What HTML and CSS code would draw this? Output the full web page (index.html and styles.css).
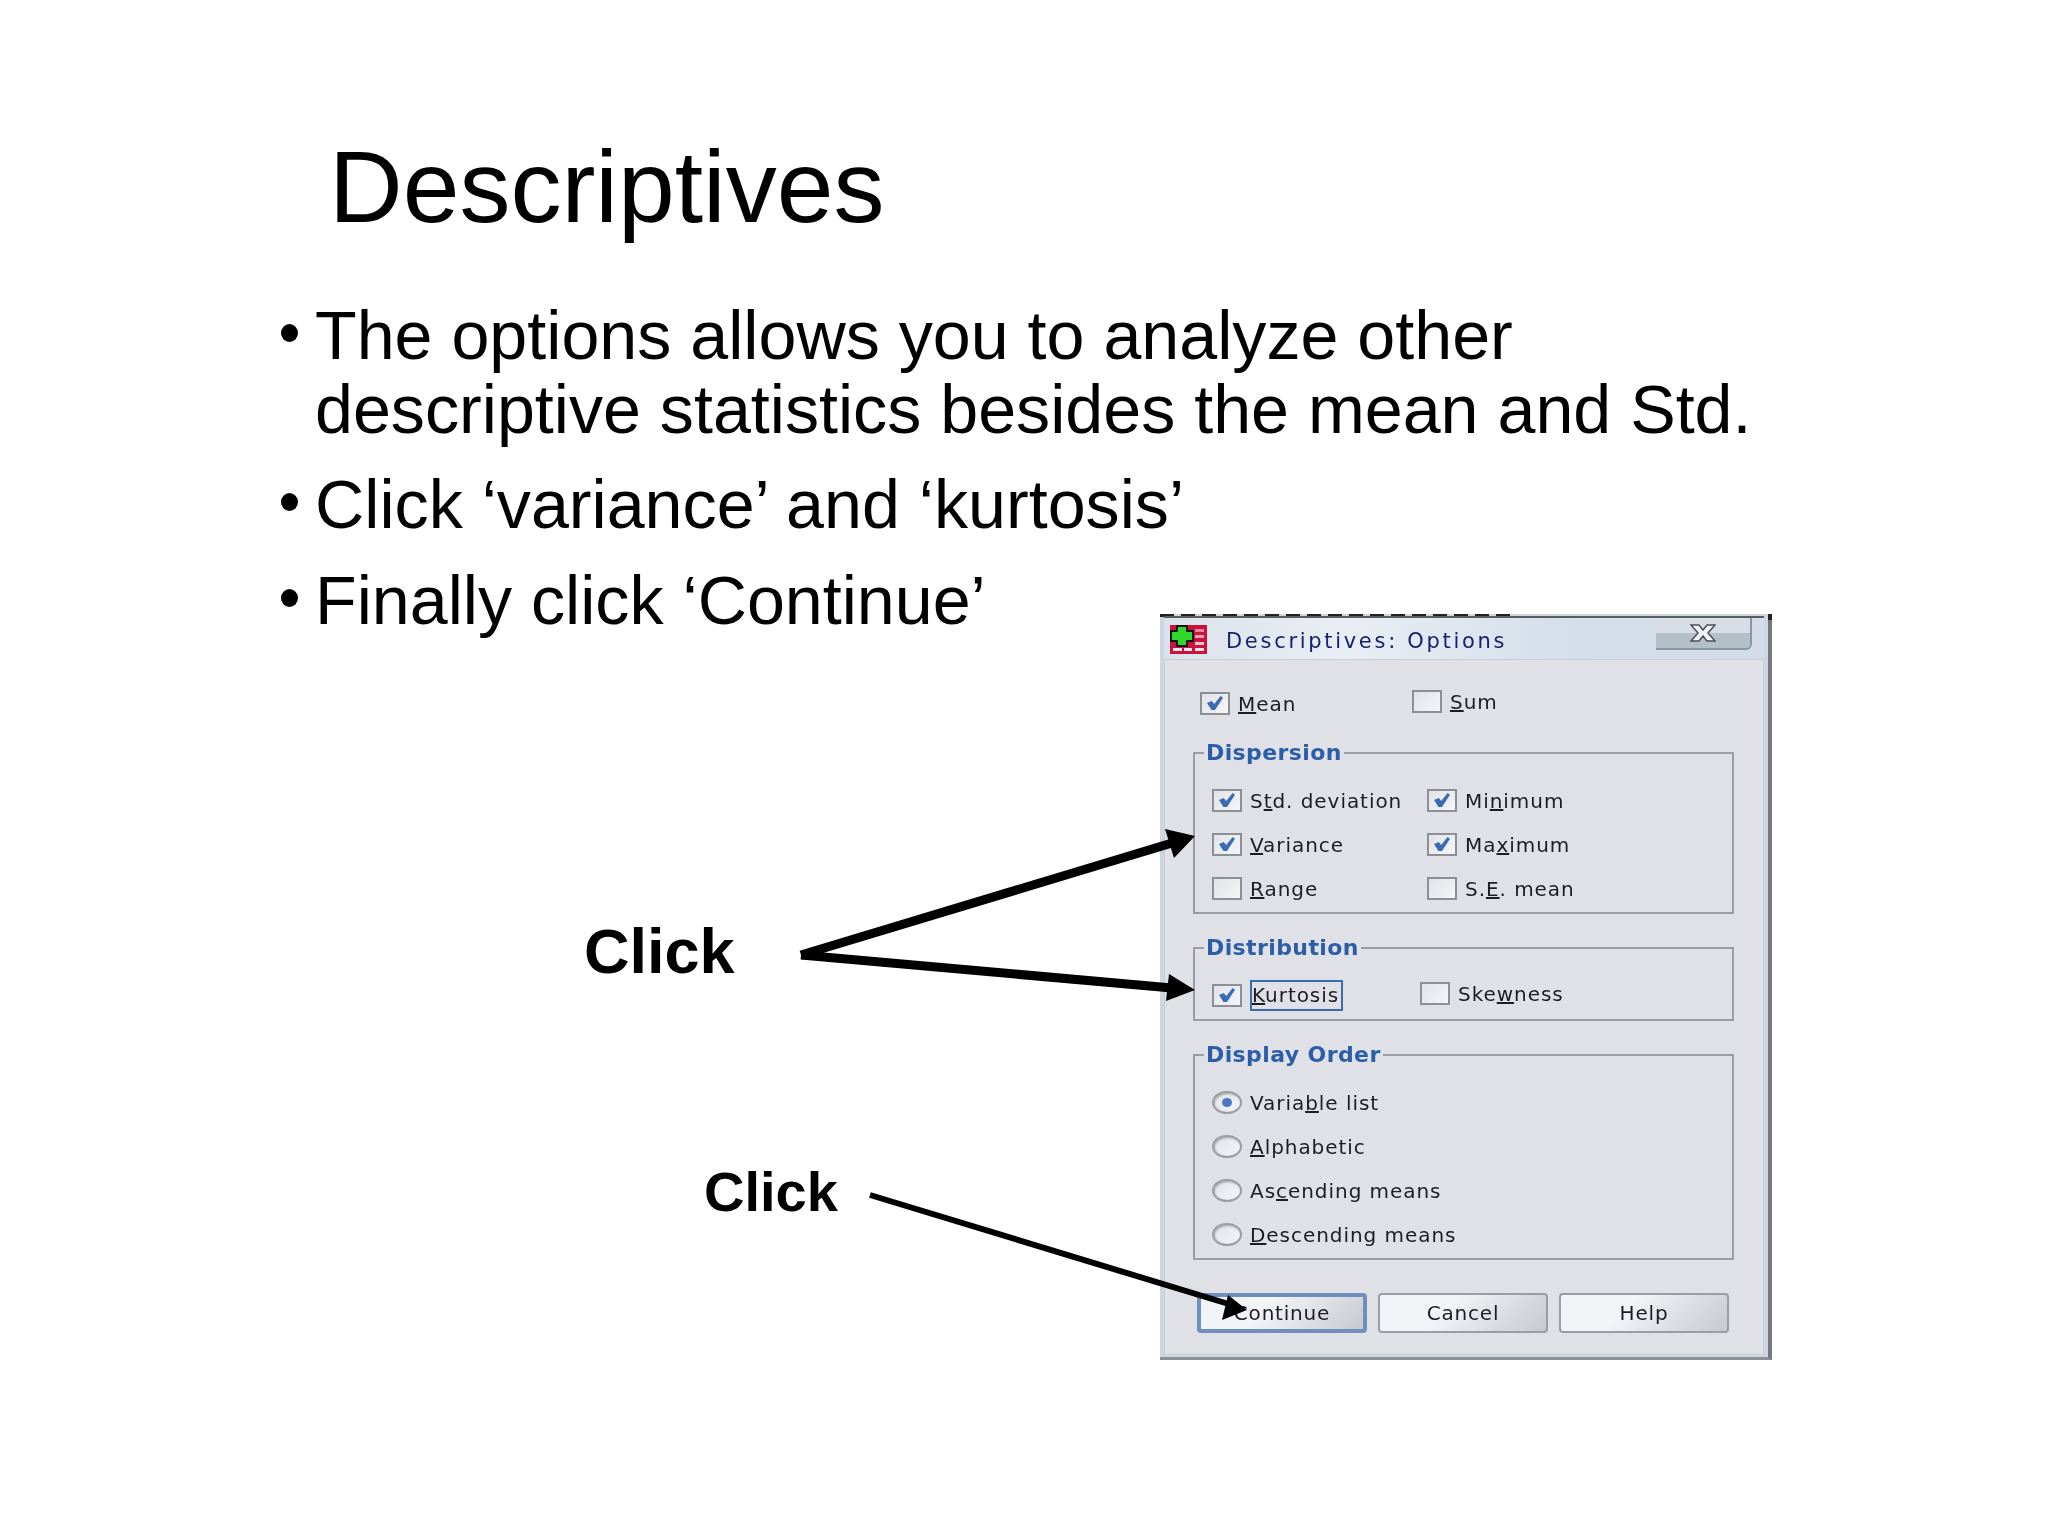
FILE: index.html
```html
<!DOCTYPE html>
<html lang="en">
<head>
    <meta charset="UTF-8">
    <title>Descriptives</title>
    <link rel="stylesheet" href="styles.css">
</head>
<body>
    <div class="slide">
        <h1 class="slide-title">Descriptives</h1>
        <ul class="bullets">
            <li>The options allows you to analyze other descriptive statistics besides the mean and Std.</li>
            <li>Click ‘variance’ and ‘kurtosis’</li>
            <li>Finally click ‘Continue’</li>
        </ul>

        <div class="callout callout-big">Click</div>
        <div class="callout callout-small">Click</div>

        <div class="dialog">
            <div class="scan-line"></div>
            <div class="titlebar">
                <svg class="app-icon" viewBox="0 0 37 29">
                    <rect width="37" height="29" fill="#c8143c"/>
                    <rect x="25" y="4" width="9" height="3" fill="#e884a0"/>
                    <rect x="25" y="10" width="9" height="3" fill="#ee9db0"/>
                    <rect x="25" y="17" width="9" height="3" fill="#f2c4d0"/>
                    <rect x="3" y="23" width="9" height="3" fill="#f6e3e8"/>
                    <rect x="14" y="23" width="8" height="3" fill="#f6e3e8"/>
                    <rect x="25" y="23" width="9" height="3" fill="#f6e3e8"/>
                    <path d="M7 1h10v5h6v10h-6v5H7v-5H1V6h6z" fill="#2fd82a" stroke="#111" stroke-width="1.8"/>
                </svg>
                <span class="dialog-title">Descriptives: Options</span>
                <div class="close-btn">
                    <svg viewBox="0 0 26 18"><path d="M1 1h8l4 5 4-5h8l-7 8 7 8h-8l-4-5-4 5H1l7-8z" fill="#f4f5f7" stroke="#4b4f58" stroke-width="1.5"/></svg>
                </div>
            </div>
            <div class="panel">
                <div class="row row-top">
                    <label class="opt"><i class="check on"></i><span><u>M</u>ean</span></label>
                    <label class="opt up"><i class="check"></i><span><u>S</u>um</span></label>
                </div>

                <div class="group">
                    <div class="legend">Dispersion</div>
                    <div class="row row-disp">
                        <label class="opt"><i class="check on"></i><span>S<u>t</u>d. deviation</span></label>
                        <label class="opt"><i class="check on"></i><span>Mi<u>n</u>imum</span></label>
                    </div>
                    <div class="row row-disp">
                        <label class="opt"><i class="check on"></i><span><u>V</u>ariance</span></label>
                        <label class="opt"><i class="check on"></i><span>Ma<u>x</u>imum</span></label>
                    </div>
                    <div class="row row-disp">
                        <label class="opt"><i class="check"></i><span><u>R</u>ange</span></label>
                        <label class="opt"><i class="check"></i><span>S.<u>E</u>. mean</span></label>
                    </div>
                </div>

                <div class="group">
                    <div class="legend">Distribution</div>
                    <div class="row row-dist">
                        <label class="opt"><i class="check on"></i><span class="focused"><u>K</u>urtosis</span></label>
                        <label class="opt up"><i class="check"></i><span>Ske<u>w</u>ness</span></label>
                    </div>
                </div>

                <div class="group">
                    <div class="legend">Display Order</div>
                    <label class="opt"><i class="radio on"></i><span>Varia<u>b</u>le list</span></label>
                    <label class="opt"><i class="radio"></i><span><u>A</u>lphabetic</span></label>
                    <label class="opt"><i class="radio"></i><span>As<u>c</u>ending means</span></label>
                    <label class="opt"><i class="radio"></i><span><u>D</u>escending means</span></label>
                </div>

                <div class="buttons">
                    <button class="btn default">Continue</button>
                    <button class="btn">Cancel</button>
                    <button class="btn">Help</button>
                </div>
            </div>
        </div>

        <!-- arrows sit on top of the dialog -->
        <svg class="arrows" viewBox="0 0 2048 1536">
            <path d="M801 955L1172 843" class="shaft"/>
            <path d="M1195 836L1165 829L1174 858z"/>
            <path d="M801 955L1172 988" class="shaft"/>
            <path d="M1195 990L1169 974L1166 1001z"/>
            <path d="M870 1195L1232 1305" class="shaft thin"/>
            <path d="M1247 1310L1228 1295L1222 1320z"/>
        </svg>
    </div>
</body>
</html>
```

FILE: styles.css
```css
* {
    margin: 0;
    padding: 0;
    box-sizing: border-box;
}

body {
    background: white;
    color: black;
    font-family: "Liberation Sans", Arial, sans-serif;
}

.slide {
    position: relative;
    width: 2048px;
    height: 1536px;
    overflow: hidden;
    padding: 129px 200px 0 279px;
}

.slide-title {
    font-size: 102px;
    font-weight: normal;
    line-height: 116px;
    margin-left: 50px;
    margin-bottom: 54px;
}

.bullets {
    list-style: none;
    font-size: 68.2px;
    line-height: 73.5px;
}

.bullets li {
    position: relative;
    padding-left: 36px;
    margin-bottom: 22px;
}

.bullets li::before {
    content: "";
    position: absolute;
    left: 2px;
    top: 25px;
    width: 17px;
    height: 18px;
    border-radius: 50%;
    background: black;
}

.callout {
    position: absolute;
    font-weight: bold;
}

.callout-big {
    left: 584px;
    top: 915px;
    font-size: 63px;
}

.callout-small {
    left: 704px;
    top: 1159px;
    font-size: 56px;
}

/* the dialog is a pasted screenshot, so it is stretched wider than tall */
.dialog {
    position: absolute;
    left: 1160px;
    top: 614px;
    width: 612px;
    height: 746px;
    padding: 4px 4px 0;
    background: #ccd7e4;
    border-right: 4px solid #75787c;
    border-bottom: 3px solid #8d9094;
    font-family: "DejaVu Sans", sans-serif;
    font-size: 20px;
    letter-spacing: 0.95px;
    color: #1c1d24;
    filter: blur(0.45px);
}

.dialog::after {
    content: "";
    position: absolute;
    right: -4px;
    top: 0;
    width: 4px;
    height: 6px;
    background: #222;
}

.scan-line {
    position: absolute;
    left: 0;
    top: 0;
    width: 350px;
    height: 3px;
    background: repeating-linear-gradient(90deg, #222 0 14px, transparent 14px 21px);
}

.titlebar {
    position: relative;
    height: 41px;
    display: flex;
    align-items: center;
    padding: 2px 0 0 6px;
    background: linear-gradient(90deg, #dbe2ea 0%, #e9eef4 30%, #d4dee9 70%, #d3dce7 100%);
    box-shadow: 0 -2px 0 #5c5f58;
}

.app-icon {
    width: 37px;
    height: 29px;
}

.dialog-title {
    margin-left: 19px;
    margin-top: 2px;
    font-size: 21px;
    letter-spacing: 2.7px;
    color: #182270;
}

.close-btn {
    position: absolute;
    right: 12px;
    top: 0;
    width: 96px;
    height: 32px;
    display: flex;
    align-items: center;
    justify-content: center;
    background: linear-gradient(#d6dde6 50%, #b4c0c8 50%);
    border-right: 2px solid #8a96a4;
    border-bottom: 2px solid #8a96a4;
    border-radius: 0 0 6px 0;
}

.close-btn svg {
    width: 26px;
    height: 18px;
}

.panel {
    height: 696px;
    padding: 32px 29px 0 28px;
    background: #e0e1e6;
    border: 1px solid #c6ced8;
}

.row {
    display: grid;
    height: 23px;
}

.row-top {
    grid-template-columns: 212px 1fr;
    padding-left: 7px;
    margin-bottom: 37px;
}

.row-disp {
    grid-template-columns: 215px 1fr;
}

.row-dist {
    grid-template-columns: 208px 1fr;
}

.opt {
    display: flex;
    align-items: center;
    height: 23px;
    white-space: nowrap;
}

.opt.up {
    margin-top: -2px;
}

.group .row + .row,
.group > .opt + .opt {
    margin-top: 21px;
}

.check,
.radio {
    flex: none;
    position: relative;
    width: 30px;
    height: 23px;
    margin-right: 8px;
    border: 2px solid #8b9097;
    background: linear-gradient(135deg, #e2e3e8, #f4f5f8);
}

.radio {
    border-radius: 50%;
    border-color: #9a9da2;
    box-shadow: inset 1px 1px 2px #a4a7ac;
}

.check.on::after {
    content: "";
    position: absolute;
    left: 5px;
    top: 2px;
    width: 16px;
    height: 14px;
    background: #3a6cb4;
    clip-path: polygon(0 50%, 30% 35%, 45% 58%, 85% 0, 100% 12%, 50% 100%, 28% 100%);
}

.radio.on::after {
    content: "";
    position: absolute;
    left: 8px;
    top: 5px;
    width: 10px;
    height: 9px;
    border-radius: 50%;
    background: #4a78c0;
}

.group {
    position: relative;
    margin-bottom: 33px;
    padding: 35px 16px 12px 17px;
    border: 2px solid #9a9da2;
}

.legend {
    position: absolute;
    left: 9px;
    top: -14px;
    padding: 0 2px;
    background: #e0e1e6;
    font-size: 22px;
    font-weight: bold;
    letter-spacing: 0.4px;
    color: #2c5ea8;
}

.focused {
    padding: 2px 2px 3px 0;
    border: 2px solid #3a6cb0;
    line-height: 22px;
}

.buttons {
    display: flex;
    gap: 11px;
    padding-left: 4px;
}

.btn {
    width: 170px;
    height: 40px;
    font-family: "DejaVu Sans", sans-serif;
    font-size: 20px;
    letter-spacing: 0.8px;
    color: #1c1d24;
    background: linear-gradient(135deg, #f2f3f6 40%, #c6c9d0 100%);
    border: 2px solid #9a9da2;
    border-radius: 4px;
}

.btn.default {
    border: 4px solid #6f8fbe;
}

.arrows {
    position: absolute;
    left: 0;
    top: 0;
    width: 2048px;
    height: 1536px;
}

.shaft {
    fill: none;
    stroke: black;
    stroke-width: 9;
}

.shaft.thin {
    stroke-width: 6;
}
```
